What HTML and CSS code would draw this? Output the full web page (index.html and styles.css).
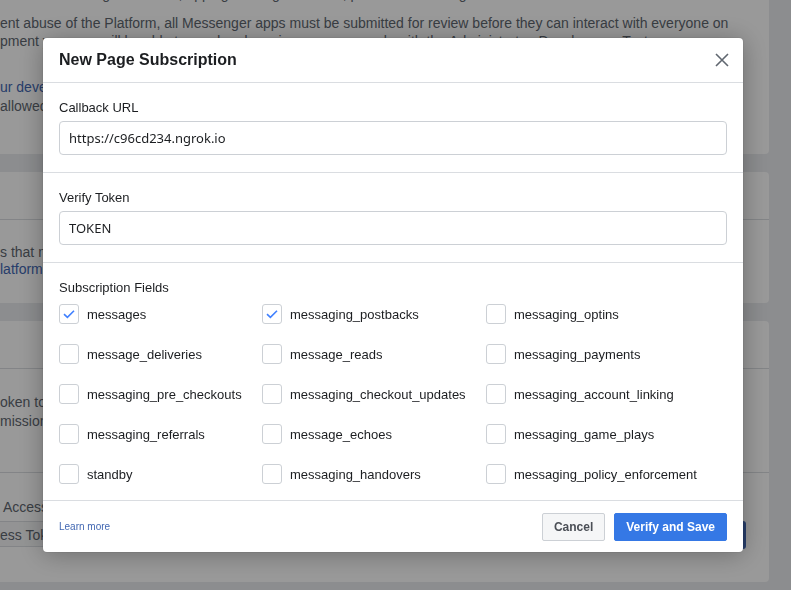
FILE: index.html
```html
<!DOCTYPE html>
<html>
<head>
<meta charset="utf-8">
<link rel="stylesheet" href="styles.css">
</head>
<body>
<div class="page">
  <div class="card card1">
    <p class="pa">the Messenger Platform, apps go through a review, please follow the guidelines</p>
    <p class="pb">ent abuse of the Platform, all Messenger apps must be submitted for review before they can interact with everyone on<br>pment your app will be able to send and receive messages only with the Administrator, Developer or Test</p>
    <p class="pc"><span class="link">ur developer</span> account settings<br>allowed to use this app</p>
  </div>
  <div class="card card2">
    <div class="card-head"></div>
    <div class="card-body2">s that may be sent to your webhook<br><span class="link">latform</span> documentation</div>
  </div>
  <div class="card card3">
    <div class="card-head"></div>
    <div class="card-body3">oken to send messages on behalf of the page<br>mission to manage the page</div>
    <div class="card-foot">
      <div class="foot-label">Access Token</div>
      <div class="foot-row">
        <div class="foot-input">ess Token</div>
        <div class="foot-btn">Generate</div>
      </div>
    </div>
  </div>
</div>
<div class="overlay"></div>
<div class="modal">
  <div class="modal-head">
    <div class="modal-title">New Page Subscription</div>
    <svg class="close" width="14" height="14" viewBox="0 0 14 14"><path d="M1 1L13 13M13 1L1 13" stroke="#606770" stroke-width="1.6" fill="none"/></svg>
  </div>
  <div class="section">
    <div class="label">Callback URL</div>
    <div class="input">https://c96cd234.ngrok.io</div>
  </div>
  <div class="section">
    <div class="label">Verify Token</div>
    <div class="input">TOKEN</div>
  </div>
  <div class="section fields">
    <div class="label">Subscription Fields</div>
    <div class="grid">
      <div class="item"><span class="cb on"><svg width="20" height="20" viewBox="0 0 20 20"><path d="M5 10.2L8.4 13.4L15 6.8" stroke="#4080ff" stroke-width="1.6" fill="none"/></svg></span>messages</div>
      <div class="item"><span class="cb on"><svg width="20" height="20" viewBox="0 0 20 20"><path d="M5 10.2L8.4 13.4L15 6.8" stroke="#4080ff" stroke-width="1.6" fill="none"/></svg></span>messaging_postbacks</div>
      <div class="item"><span class="cb"></span>messaging_optins</div>
      <div class="item"><span class="cb"></span>message_deliveries</div>
      <div class="item"><span class="cb"></span>message_reads</div>
      <div class="item"><span class="cb"></span>messaging_payments</div>
      <div class="item"><span class="cb"></span>messaging_pre_checkouts</div>
      <div class="item"><span class="cb"></span>messaging_checkout_updates</div>
      <div class="item"><span class="cb"></span>messaging_account_linking</div>
      <div class="item"><span class="cb"></span>messaging_referrals</div>
      <div class="item"><span class="cb"></span>message_echoes</div>
      <div class="item"><span class="cb"></span>messaging_game_plays</div>
      <div class="item"><span class="cb"></span>standby</div>
      <div class="item"><span class="cb"></span>messaging_handovers</div>
      <div class="item"><span class="cb"></span>messaging_policy_enforcement</div>
    </div>
  </div>
  <div class="modal-foot">
    <a class="learn">Learn more</a>
    <div class="btns">
      <div class="btn cancel">Cancel</div>
      <div class="btn save">Verify and Save</div>
    </div>
  </div>
</div>
</body>
</html>
```
FILE: styles.css
```css
html, body {
  margin: 0;
  padding: 0;
  height: 100%;
  overflow: hidden;
}
body {
  background: #e9ebee;
  font-family: "Liberation Sans", Arial, Helvetica, sans-serif;
  color: #1c1e21;
}
.page {
  width: 769px;
}
.card {
  background: #fff;
  border-radius: 0 0 4px 0;
  color: #606770;
  font-size: 14px;
  line-height: 18px;
  white-space: nowrap;
  overflow: hidden;
}
.card1 {
  margin-top: -15px;
  padding-bottom: 38px;
}
.card1 p { margin: 0; }
.pa { padding-left: 30px; }
.pb { margin-top: 11px !important; }
.pc { margin-top: 28px !important; line-height: 19px; }
.link { color: #4267b2; }
.card2 {
  margin-top: 18px;
  border-radius: 0 4px 4px 0;
}
.card-head {
  height: 47px;
  border-bottom: 1px solid #dadde1;
}
.card-body2 {
  padding: 24px 0 25px 0;
  line-height: 17px;
}
.card3 {
  margin-top: 18px;
  border-radius: 0 4px 4px 0;
  height: 261px;
}
.card-body3 {
  padding: 24px 0 0 0;
  line-height: 19px;
  height: 79px;
  border-bottom: 1px solid #dadde1;
}
.card-foot {
  padding: 25px 23px 0 0;
}
.foot-label {
  margin-left: 3px;
  font-size: 14px;
}
.foot-row {
  display: flex;
  gap: 8px;
  margin-top: 5px;
}
.foot-input {
  flex: 1;
  height: 26px;
  line-height: 26px;
  background: #f5f6f7;
  border: 1px solid #dadde1;
  border-left: 0;
  box-sizing: border-box;
}
.foot-btn {
  width: 90px;
  height: 28px;
  background: #4267b2;
  border-radius: 3px;
  color: #fff;
  font-weight: bold;
  font-size: 12px;
  line-height: 28px;
  text-align: center;
}
.overlay {
  position: fixed;
  inset: 0;
  background: rgba(0, 0, 0, 0.4);
}
.modal {
  position: fixed;
  left: 43px;
  top: 38px;
  width: 700px;
  background: #fff;
  border-radius: 4px;
  box-shadow: 0 2px 26px rgba(0, 0, 0, 0.3), 0 0 0 1px rgba(0, 0, 0, 0.05);
}
.modal-head {
  height: 44px;
  border-bottom: 1px solid #dadde1;
  display: flex;
  align-items: center;
  justify-content: space-between;
  padding: 0 14px 0 16px;
}
.modal-title {
  font-size: 16px;
  font-weight: bold;
  color: #1c1e21;
}
.close { display: block; }
.section {
  padding: 17px 16px 17px 16px;
  border-bottom: 1px solid #dadde1;
}
.label {
  font-size: 13px;
  line-height: 16px;
  color: #1c1e21;
  margin-bottom: 5px;
}
.input {
  height: 34px;
  box-sizing: border-box;
  border: 1px solid #ccd0d5;
  border-radius: 4px;
  padding: 0 9px;
  font-family: "Noto Sans", "Open Sans", sans-serif;
  font-size: 13px;
  line-height: 32px;
  color: #1c1e21;
}
.fields {
  padding-bottom: 16px;
}
.fields .label {
  margin-bottom: 8px;
}
.grid {
  display: grid;
  grid-template-columns: 203px 224px 1fr;
  row-gap: 20px;
}
.item {
  display: flex;
  align-items: center;
  gap: 8px;
  height: 20px;
  font-size: 13px;
  color: #1c1e21;
}
.cb {
  width: 20px;
  height: 20px;
  box-sizing: border-box;
  border: 1px solid #ccd0d5;
  border-radius: 3px;
  display: flex;
  align-items: center;
  justify-content: center;
  flex: none;
}
.cb svg { display: block; margin: -1px; }
.modal-foot {
  height: 51px;
  display: flex;
  align-items: center;
  justify-content: space-between;
  padding: 0 16px;
}
.learn {
  font-size: 10px;
  color: #4267b2;
}
.btns {
  display: flex;
  gap: 9px;
}
.btn {
  height: 28px;
  box-sizing: border-box;
  border-radius: 2px;
  font-size: 12px;
  font-weight: bold;
  line-height: 26px;
  padding: 0 11px;
  border: 1px solid;
}
.cancel {
  background: #f5f6f7;
  border-color: #ccd0d5;
  color: #4b4f56;
}
.save {
  background: #3578e5;
  border-color: #3578e5;
  color: #fff;
}
```
